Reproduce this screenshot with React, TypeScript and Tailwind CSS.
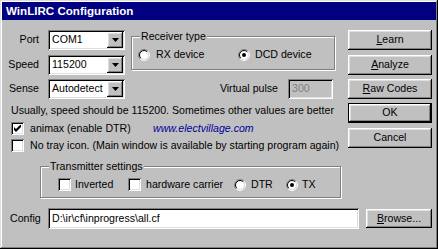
import type { ReactNode } from "react";

const raised =
	"shadow-[inset_-1px_-1px_0_#000,inset_1px_1px_0_#fff,inset_-2px_-2px_0_#808080,inset_2px_2px_0_#dfdfdf]";
const sunken =
	"shadow-[inset_1px_1px_0_#808080,inset_-1px_-1px_0_#fff,inset_2px_2px_0_#000,inset_-2px_-2px_0_#dfdfdf]";
const etched = "border border-[#808080] shadow-[1px_1px_0_#fff,inset_1px_1px_0_#fff]";

function Combo({ value }: { value: string }) {
	return (
		<div className={`flex h-[20px] w-[77px] bg-white p-[2px] ${sunken}`}>
			<div className="flex flex-1 items-center overflow-hidden whitespace-nowrap pl-[2px]">{value}</div>
			<div className={`flex h-full w-[16px] items-center justify-center bg-[#c0c0c0] ${raised}`}>
				<svg width="7" height="4" viewBox="0 0 7 4">
					<polygon points="0,0 7,0 3.5,4" fill="#000" />
				</svg>
			</div>
		</div>
	);
}

function Check({ checked }: { checked?: boolean }) {
	return (
		<div className={`flex h-[13px] w-[13px] shrink-0 items-center justify-center bg-white ${sunken}`}>
			{checked && (
				<svg width="7" height="7" viewBox="0 0 7 7">
					<path d="M0 2 L2 4 L7 -1 L7 2 L2 7 L0 5 Z" fill="#000" />
				</svg>
			)}
		</div>
	);
}

function Radio({ checked }: { checked?: boolean }) {
	const k = 0.7071;
	const arc = (r: number, a: boolean) => {
		const bl = `${6 - r * k} ${6 + r * k}`;
		const tr = `${6 + r * k} ${6 - r * k}`;
		return a ? `M${bl} A${r} ${r} 0 0 1 ${tr}` : `M${tr} A${r} ${r} 0 0 1 ${bl}`;
	};
	return (
		<svg width="12" height="12" viewBox="0 0 12 12" className="shrink-0">
			<circle cx="6" cy="6" r="4.5" fill="#fff" />
			<path d={arc(5.5, true)} stroke="#808080" strokeWidth="1" fill="none" />
			<path d={arc(4.5, true)} stroke="#000" strokeWidth="1" fill="none" />
			<path d={arc(5.5, false)} stroke="#fff" strokeWidth="1" fill="none" />
			<path d={arc(4.5, false)} stroke="#dfdfdf" strokeWidth="1" fill="none" />
			{checked && <circle cx="6" cy="6" r="2" fill="#000" />}
		</svg>
	);
}

function Button({ children, className = "", def }: { children: ReactNode; className?: string; def?: boolean }) {
	if (def) {
		return (
			<div className={`border border-black ${className}`}>
				<div className={`flex h-full w-full items-center justify-center bg-[#c0c0c0] ${raised}`}>{children}</div>
			</div>
		);
	}
	return (
		<div className={`flex items-center justify-center bg-[#c0c0c0] ${raised} ${className}`}>{children}</div>
	);
}

function Group({ label, className = "", children }: { label: string; className?: string; children: ReactNode }) {
	return (
		<div className={`relative ${etched} ${className}`}>
			<span className="absolute -top-[7px] left-[8px] bg-[#c0c0c0] px-[1px] leading-[13px]">{label}</span>
			{children}
		</div>
	);
}

export default function App() {
	return (
		<div
			className={`flex h-[249px] w-[438px] flex-col bg-[#c0c0c0] p-[2px] font-['Liberation_Sans',Arial,sans-serif] text-[10.6px] text-black shadow-[inset_-1px_-1px_0_#000,inset_1px_1px_0_#dfdfdf,inset_-2px_-2px_0_#808080,inset_2px_2px_0_#fff]`}
		>
			{/* Title bar */}
			<div className="flex h-[18px] items-center bg-[#000080] pl-[4px] text-[11.6px] font-bold text-white">
				WinLIRC Configuration
			</div>

			{/* Top section */}
			<div className="flex pt-[10px]">
				<div className="flex w-[346px] flex-col">
					<div className="flex h-[69px]">
						<div className="flex w-[123px] flex-col">
							<div className="flex items-center">
								<span className="w-[37px] text-right">Port</span>
								<div className="ml-[9px]">
									<Combo value="COM1" />
								</div>
							</div>
							<div className="mt-[5px] flex items-center">
								<span className="w-[37px] text-right">Speed</span>
								<div className="ml-[9px]">
									<Combo value="115200" />
								</div>
							</div>
							<div className="mt-[4px] flex items-center">
								<span className="w-[37px] text-right">Sense</span>
								<div className="ml-[9px]">
									<Combo value="Autodetect" />
								</div>
							</div>
						</div>

						<div className="ml-[6px] flex w-[204px] flex-col">
							<Group label="Receiver type" className="mt-[6px] h-[34px] w-[204px]">
								<div className="mt-[10px] flex items-center pl-[6px]">
									<Radio />
									<span className="ml-[6px] w-[82px]">RX device</span>
									<Radio checked />
									<span className="ml-[5px]">DCD device</span>
								</div>
							</Group>
							<div className="mt-[9px] flex items-center justify-end pr-[2px]">
								<span className="mr-[10px]">Virtual pulse</span>
								<div className={`flex h-[20px] w-[45px] items-center pl-[4px] text-[#808080] ${sunken}`}>300</div>
							</div>
						</div>
					</div>

					<div className="mt-[5px] h-[13px] pl-[9px] leading-[13px] whitespace-nowrap">
						Usually, speed should be 115200. Sometimes other values are better
					</div>

					<div className="mt-[3px] flex h-[17px] items-center pl-[9px]">
						<Check checked />
						<span className="ml-[6px] w-[123px] whitespace-nowrap">animax (enable DTR)</span>
						<span className="text-[#000099] italic">www.electvillage.com</span>
					</div>
					<div className="flex h-[17px] items-center pl-[9px]">
						<Check />
						<span className="ml-[6px] whitespace-nowrap">No tray icon. (Main window is available by starting program again)</span>
					</div>

					<Group label="Transmitter settings" className="mt-[12px] ml-[38px] h-[32px] w-[301px]">
						<div className="mt-[10px] flex items-center pl-[17px]">
							<Check />
							<span className="ml-[4px] w-[53px]">Inverted</span>
							<Check />
							<span className="ml-[5px] w-[88px] whitespace-nowrap">hardware carrier</span>
							<Radio />
							<span className="ml-[5px] w-[35px]">DTR</span>
							<Radio checked />
							<span className="ml-[4px]">TX</span>
						</div>
					</Group>
				</div>

				<div className="flex w-[84px] flex-col">
					<Button className="h-[20px]">
						<span>
							<u>L</u>earn
						</span>
					</Button>
					<Button className="mt-[5px] h-[20px]">
						<span>
							<u>A</u>nalyze
						</span>
					</Button>
					<Button className="mt-[4px] h-[20px]">
						<span>
							<u>R</u>aw Codes
						</span>
					</Button>
					<Button def className="mt-[4px] h-[20px]">
						OK
					</Button>
					<Button className="mt-[5px] h-[20px]">Cancel</Button>
				</div>
			</div>

			{/* Config row */}
			<div className="mt-[10px] flex h-[21px] items-center pl-[8px]">
				<span className="w-[38px]">Config</span>
				<div className={`flex h-[21px] w-[311px] items-center bg-white pl-[4px] ${sunken}`}>D:\ir\cf\inprogress\all.cf</div>
				<Button className="ml-[7px] h-[19px] w-[66px]">
					<span>
						<u>B</u>rowse...
					</span>
				</Button>
			</div>
		</div>
	);
}
